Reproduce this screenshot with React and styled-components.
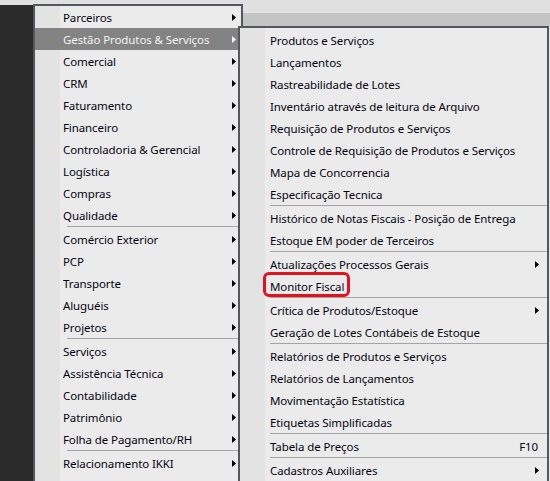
import styled, { createGlobalStyle } from "styled-components";

const GlobalStyle = createGlobalStyle`
  html, body {
    margin: 0;
    padding: 0;
    background: #e0e0e0;
  }
  * {
    box-sizing: border-box;
  }
`;

const Screen = styled.div`
  position: relative;
  width: 550px;
  height: 481px;
  overflow: hidden;
  display: flex;
  background: #e0e0e0;
  font-family: "Noto Sans", "Open Sans", sans-serif;
  font-size: 11.5px;
  letter-spacing: -0.1px;
`;

const Rail = styled.div`
  width: 33px;
  margin-top: 5px;
  background: #2a2a2a;
`;

const Workspace = styled.div`
  flex: 1;
  display: flex;
  flex-direction: column;
  padding-top: 13px;
`;

const ToolBand = styled.div`
  height: 13px;
  background: #c4c4c4;
`;

const WorkArea = styled.div`
  flex: 1;
  background: #e6e6e6;
`;

const Menu = styled.div`
  position: absolute;
  left: ${(p) => p.$left}px;
  top: ${(p) => p.$top}px;
  width: ${(p) => p.$width}px;
  height: 600px;
  padding-top: ${(p) => p.$pad || 0}px;
  border: 2px solid #54585e;
  background: linear-gradient(
    90deg,
    #e3e3e3 0,
    #e3e3e3 ${(p) => p.$gutter}px,
    #ebebeb ${(p) => p.$gutter}px
  );
`;

const Row = styled.div`
  display: flex;
  align-items: center;
  height: 22px;
  padding-top: 1px;
  padding-left: ${(p) => p.$indent}px;
  padding-right: ${(p) => p.$right}px;
  color: ${(p) => (p.$active ? "#f4f4f4" : "#05050f")};
  background: ${(p) => (p.$active ? "#838383" : "transparent")};
  white-space: nowrap;
`;

const Label = styled.span`
  flex: 1;
  line-height: 21px;
`;

const Callout = styled.span`
  position: relative;
  line-height: 21px;

  &::after {
    content: "";
    position: absolute;
    left: -7px;
    right: -6px;
    top: -4px;
    bottom: 0;
    border: 3px solid #e2121e;
    border-radius: 6px;
  }
`;

const Shortcut = styled.span`
  margin-right: 1px;
`;

const Separator = styled.div`
  height: 2px;
  margin-left: ${(p) => p.$indent}px;
  border-top: 1px solid #a4a4a4;
`;

function Arrow({ light }) {
  return (
    <svg width="4" height="7" viewBox="0 0 4 7">
      <polygon points="0,0 4,3.5 0,7" fill={light ? "#f4f4f4" : "#000"} />
    </svg>
  );
}

const mainItems = [
  "Parceiros",
  "Gestão Produtos & Serviços",
  "Comercial",
  "CRM",
  "Faturamento",
  "Financeiro",
  "Controladoria & Gerencial",
  "Logística",
  "Compras",
  "Qualidade",
  "-",
  "Comércio Exterior",
  "PCP",
  "Transporte",
  "Aluguéis",
  "Projetos",
  "-",
  "Serviços",
  "Assistência Técnica",
  "Contabilidade",
  "Patrimônio",
  "Folha de Pagamento/RH",
  "-",
  "Relacionamento IKKI",
];

const subItems = [
  { label: "Produtos e Serviços" },
  { label: "Lançamentos" },
  { label: "Rastreabilidade de Lotes" },
  { label: "Inventário através de leitura de Arquivo" },
  { label: "Requisição de Produtos e Serviços" },
  { label: "Controle de Requisição de Produtos e Serviços" },
  { label: "Mapa de Concorrencia" },
  { label: "Especificação Tecnica" },
  "-",
  { label: "Histórico de Notas Fiscais - Posição de Entrega" },
  { label: "Estoque EM poder de Terceiros" },
  "-",
  { label: "Atualizações Processos Gerais", sub: true },
  { label: "Monitor Fiscal", marked: true },
  "-",
  { label: "Crítica de Produtos/Estoque", sub: true },
  { label: "Geração de Lotes Contábeis de Estoque" },
  "-",
  { label: "Relatórios de Produtos e Serviços" },
  { label: "Relatórios de Lançamentos" },
  { label: "Movimentação Estatística" },
  { label: "Etiquetas Simplificadas" },
  "-",
  { label: "Tabela de Preços", key: "F10" },
  "-",
  { label: "Cadastros Auxiliares", sub: true },
];

export default function App() {
  return (
    <>
      <GlobalStyle />
      <Screen>
        <Rail />
        <Workspace>
          <ToolBand />
          <WorkArea />
        </Workspace>

        <Menu $left={33} $top={4} $width={210} $gutter={25}>
          {mainItems.map((item, i) =>
            item === "-" ? (
              <Separator key={i} $indent={32} />
            ) : (
              <Row key={i} $indent={28} $right={5} $active={i === 1}>
                <Label>{item}</Label>
                <Arrow light={i === 1} />
              </Row>
            )
          )}
        </Menu>

        <Menu $left={238} $top={26} $width={311} $pad={1} $gutter={25}>
          {subItems.map((item, i) =>
            item === "-" ? (
              <Separator key={i} $indent={30} />
            ) : (
              <Row key={i} $indent={30} $right={8}>
                {item.marked ? (
                  <>
                    <Callout>{item.label}</Callout>
                    <Label />
                  </>
                ) : (
                  <Label>{item.label}</Label>
                )}
                {item.sub && <Arrow />}
                {item.key && <Shortcut>{item.key}</Shortcut>}
              </Row>
            )
          )}
        </Menu>
      </Screen>
    </>
  );
}
